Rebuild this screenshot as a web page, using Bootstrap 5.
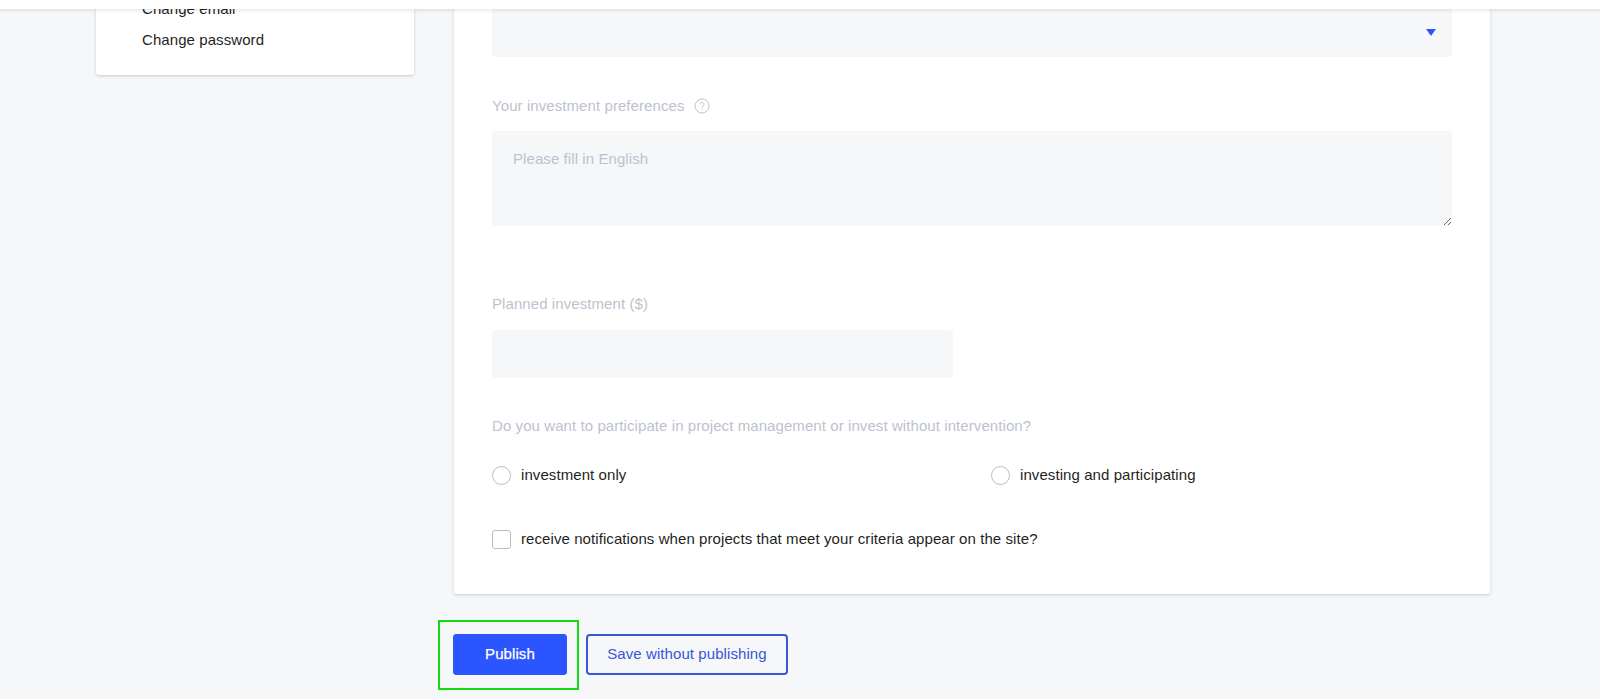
<!DOCTYPE html>
<html lang="en">
<head>
<meta charset="utf-8">
<title>Investor form</title>
<link rel="stylesheet" href="https://cdn.jsdelivr.net/npm/bootstrap@5.3.0/dist/css/bootstrap.min.css">
<style>
html,body{height:699px;overflow:hidden}
body{background:#f5f7f9;font-family:"Liberation Sans",Arial,sans-serif;font-size:15px;color:#1f1f1f;letter-spacing:.08px}
.top-strip{position:fixed;top:0;left:0;right:0;height:9px;background:#fff;box-shadow:0 1px 4px rgba(30,40,70,.14);z-index:10}
.page-shell{padding-left:96px;padding-right:110px;gap:40px;align-items:flex-start}
.side-panel{width:318px;flex:none;background:#fff;border-radius:3px;box-shadow:0 1px 3px rgba(30,40,70,.22);padding:0 0 25px 46px;height:75px;overflow:hidden}
.side-link{display:block;color:#1f1f1f;text-decoration:none;line-height:20px}
.side-link.cut{margin-top:-1px;margin-bottom:11px}
.main-col{width:1036px;flex:none}
.form-panel{background:#fff;border-radius:3px;box-shadow:0 1px 3px rgba(30,40,70,.22);height:594px;padding:0 38px}
.fake-select{height:57px;background:#f5f7f9;border-radius:0 0 4px 4px;padding-right:16px;margin-bottom:39px}
.caret-down{width:0;height:0;border-left:5px solid transparent;border-right:5px solid transparent;border-top:7px solid #2b55ff;margin-top:8px}
.field-label{color:#bcc2ce;line-height:20px;margin:0}
.help-dot{margin-left:9px}
.soft-area{display:block;width:960px;height:95px;background:#f5f7f9;border:0;border-radius:4px;padding:18px 21px;margin-top:15px;margin-bottom:68px;color:#1f1f1f;line-height:20px;font-size:15px;letter-spacing:.08px;font-family:inherit}
.soft-area::placeholder{color:#bcc2ce;opacity:1}
.soft-input{display:block;width:461px;height:48px;background:#f5f7f9;border:0;border-radius:4px;margin-top:16px;margin-bottom:38px}
.choice-row{margin-top:29px;margin-bottom:43px;height:20px}
.choice{width:499px;flex:none;gap:10px}
.round-box{width:19px;height:19px;border:1px solid #b9bdc6;border-radius:50%;background:#fff;flex:none}
.square-box{width:19px;height:19px;border:1px solid #b9bdc6;border-radius:3px;background:#fff;flex:none}
.check-row{gap:10px;margin-top:0}
.action-row{position:relative;margin-top:40px;margin-left:-1px;gap:19px}
.btn-publish{width:114px;height:41px;background:#2b55ff;border:1px solid #2b55ff;color:#fff;font-size:15px;border-radius:3px;padding:0;letter-spacing:.08px;-webkit-text-stroke:.25px #fff}
.btn-publish:hover{background:#2b55ff;color:#fff;border-color:#2b55ff}
.btn-save{width:202px;height:41px;background:transparent;border:2px solid #3a55d8;color:#3a55d8;font-size:15px;border-radius:4px;padding:0;letter-spacing:.08px}
.green-mark{position:absolute;left:-15px;top:-14px;width:141px;height:70px;border:2.5px solid #14dc14;pointer-events:none}
</style>
</head>
<body>
<div class="top-strip"></div>
<div class="d-flex page-shell">
  <aside class="side-panel">
    <a class="side-link cut" href="#">Change email</a>
    <a class="side-link" href="#">Change password</a>
  </aside>
  <div class="main-col">
    <div class="form-panel">
      <div class="fake-select d-flex align-items-center justify-content-end"><span class="caret-down"></span></div>
      <div class="d-flex align-items-center">
        <p class="field-label">Your investment preferences</p>
        <svg class="help-dot" width="16" height="16" viewBox="0 0 16 16" fill="none" stroke="#bcc2ce"><circle cx="8" cy="8" r="7"/><path d="M6 6.4a2 2 0 1 1 3.1 1.6c-.7.5-1.1.8-1.1 1.7" stroke-width="1"/><circle cx="8" cy="11.7" r=".6" fill="#bcc2ce" stroke="none"/></svg>
      </div>
      <textarea class="soft-area" placeholder="Please fill in English"></textarea>
      <p class="field-label">Planned investment ($)</p>
      <input class="soft-input" type="text" aria-label="Planned investment">
      <p class="field-label">Do you want to participate in project management or invest without intervention?</p>
      <div class="d-flex choice-row">
        <div class="d-flex align-items-center choice"><span class="round-box"></span><span>investment only</span></div>
        <div class="d-flex align-items-center choice"><span class="round-box"></span><span>investing and participating</span></div>
      </div>
      <div class="d-flex align-items-center check-row"><span class="square-box"></span><span>receive notifications when projects that meet your criteria appear on the site?</span></div>
    </div>
    <div class="d-flex action-row">
      <button class="btn btn-publish" type="button">Publish</button>
      <button class="btn btn-save" type="button">Save without publishing</button>
      <div class="green-mark"></div>
    </div>
  </div>
</div>
<script src="https://cdn.jsdelivr.net/npm/bootstrap@5.3.0/dist/js/bootstrap.bundle.min.js"></script>
</body>
</html>
